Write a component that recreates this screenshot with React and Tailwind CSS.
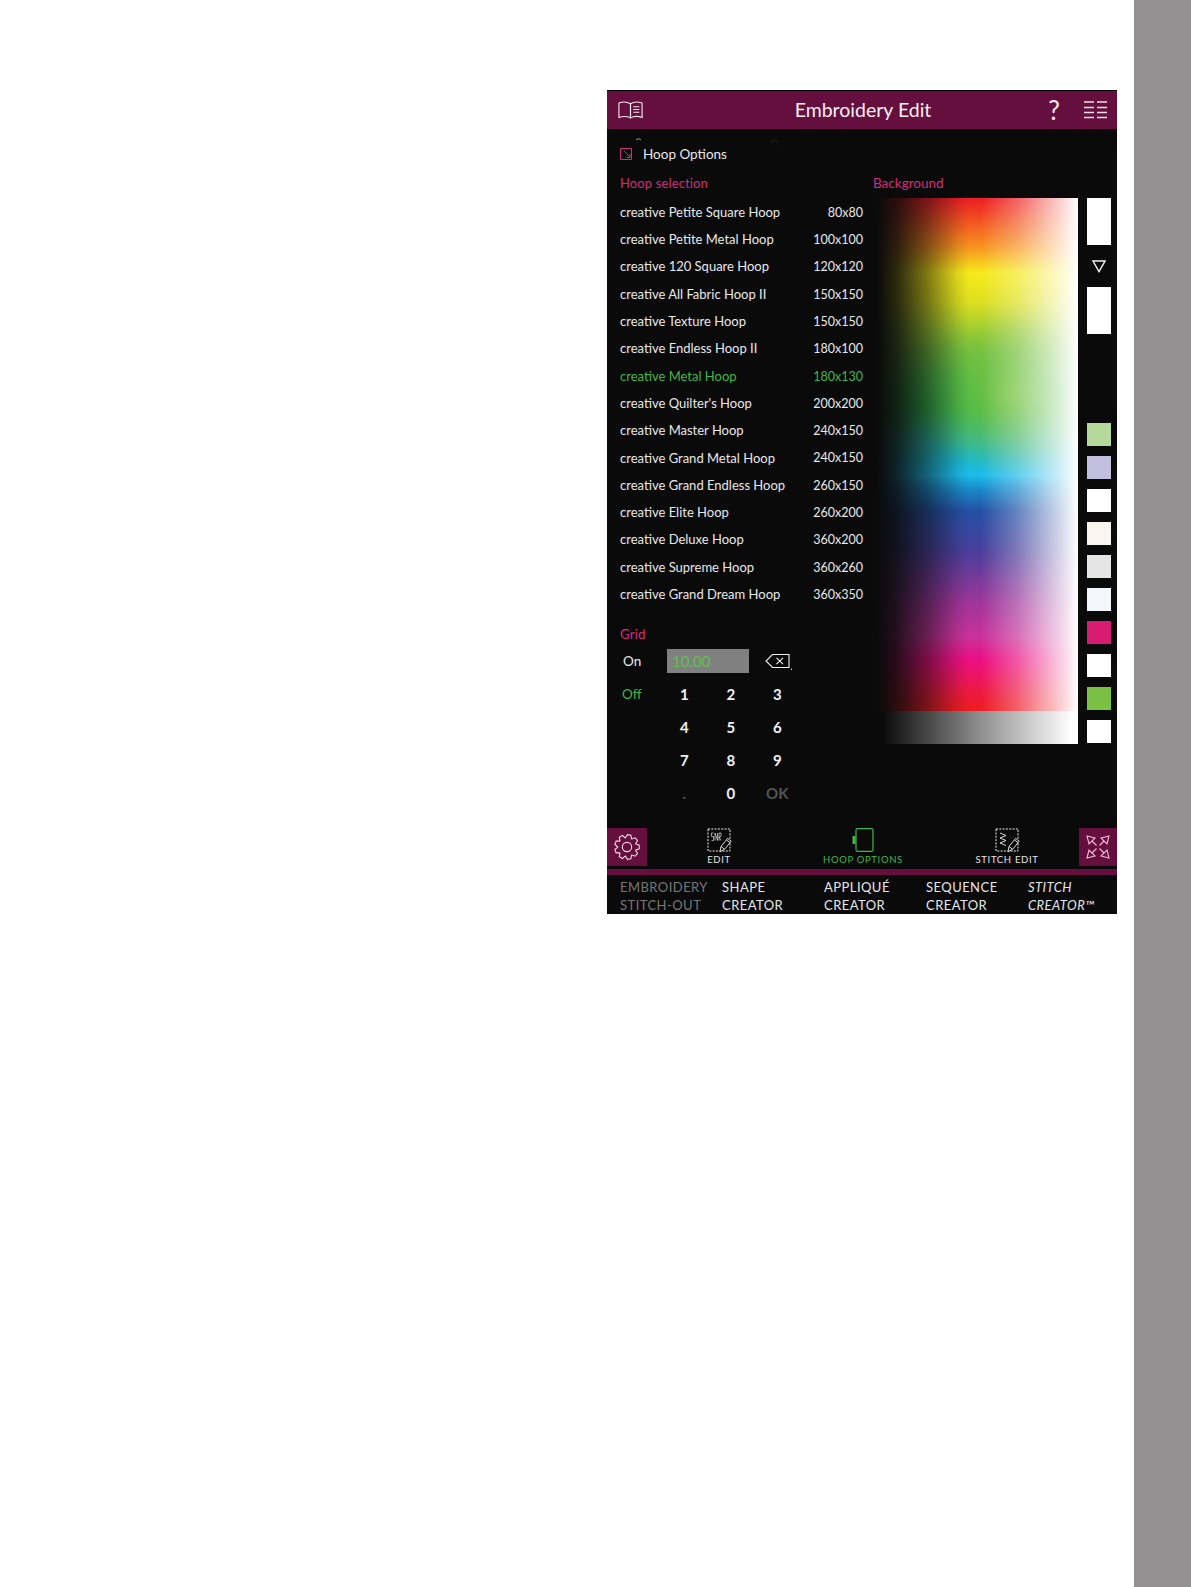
import React from 'react'

const FONT = "font-['Lato','Noto_Sans',sans-serif]"

const hoops = [
  ['creative Petite Square Hoop', '80x80'],
  ['creative Petite Metal Hoop', '100x100'],
  ['creative 120 Square Hoop', '120x120'],
  ['creative All Fabric Hoop II', '150x150'],
  ['creative Texture Hoop', '150x150'],
  ['creative Endless Hoop II', '180x100'],
  ['creative Metal Hoop', '180x130', true],
  ["creative Quilter's Hoop", '200x200'],
  ['creative Master Hoop', '240x150'],
  ['creative Grand Metal Hoop', '240x150'],
  ['creative Grand Endless Hoop', '260x150'],
  ['creative Elite Hoop', '260x200'],
  ['creative Deluxe Hoop', '360x200'],
  ['creative Supreme Hoop', '360x260'],
  ['creative Grand Dream Hoop', '360x350'],
]

const tabs = [
  ['EMBROIDERY', 'STITCH-OUT', 'text-[#777777]'],
  ['SHAPE', 'CREATOR', 'text-[#e6e6e6]'],
  ['APPLIQUÉ', 'CREATOR', 'text-[#e6e6e6]'],
  ['SEQUENCE', 'CREATOR', 'text-[#e6e6e6]'],
  ['STITCH', 'CREATOR™', 'text-[#e6e6e6] italic'],
]

const gearPath = () => {
  const teeth = 9
  const pts = []
  for (let i = 0; i < teeth; i++) {
    const a = (i / teeth) * Math.PI * 2
    const w = Math.PI / teeth
    const add = (r, t) => pts.push([(12 + r * Math.cos(t)).toFixed(2), (12 + r * Math.sin(t)).toFixed(2)])
    add(8.6, a - w * 0.95)
    add(11.4, a - w * 0.42)
    add(11.4, a + w * 0.42)
    add(8.6, a + w * 0.95)
  }
  return 'M' + pts.map((p) => p.join(' ')).join('L') + 'Z'
}

const Book = () => (
  <svg width="25" height="20" viewBox="0 0 27 20" fill="none" stroke="#f4e9ef" strokeWidth="1.2">
    <path d="M1 2.5C5 1 9.5 1 13.5 3.2V18.5C9.5 16.6 5 16.6 1 18Z" />
    <path d="M13.5 3.2C17 1 22 1 26 2.5V18C22 16.6 17 16.6 13.5 18.5Z" />
    <path d="M16.5 6.5H23M16.5 9.5H23M16.5 12.5H23" />
  </svg>
)

const Menu = () => (
  <svg width="24" height="18" viewBox="0 0 24 18" stroke="#f6dbe8" strokeWidth="1.4">
    <path d="M0 1H10M13 1H23M0 6.5H10M13 6.5H23M0 11.5H10M13 11.5H23M0 16.5H10M13 16.5H23" />
  </svg>
)

const Backspace = () => (
  <svg width="28" height="18" viewBox="0 0 28 18" fill="none" stroke="#f0f0f0" strokeWidth="1.1">
    <path d="M7.5 1.5H24V14.5H7.5L1 8Z" />
    <path d="M11.5 4.8L18 11.2M18 4.8L11.5 11.2" />
    <path d="M26.2 16.2H27" strokeWidth="1.4" />
  </svg>
)

const Pencil = () => (
  <g fill="#0a0a0a" stroke="#eeeeee" strokeWidth="0.9">
    <path d="M13 23.8L14 18.5L20.6 10.4L24.2 13.2L17.6 21.3Z" />
    <path d="M19.4 11.9L23 14.7M14 18.5L17.6 21.3" />
  </g>
)

const EditIcon = () => (
  <svg width="25" height="25" viewBox="0 0 25 25">
    <rect x="1" y="1" width="22" height="22" fill="none" stroke="#eeeeee" strokeWidth="1" strokeDasharray="2 1.3" />
    <path d="M6.5 5H4.5V8.5H6.5V12.5H4.5M8 12.5V5L10.5 12.5V5M12 12.5V5H14V8.5L12 9L14 12.5" fill="none" stroke="#dddddd" strokeWidth="0.7" />
    <Pencil />
  </svg>
)

const StitchIcon = () => (
  <svg width="25" height="25" viewBox="0 0 25 25">
    <rect x="1" y="1" width="22" height="22" fill="none" stroke="#eeeeee" strokeWidth="1" strokeDasharray="2 1.3" />
    <path d="M5 5L11 7.5L5 10L11 12.5L5 15L11 17.5" fill="none" stroke="#eeeeee" strokeWidth="0.9" />
    <Pencil />
  </svg>
)

const HoopIcon = () => (
  <svg width="22" height="25" viewBox="0 0 22 25" fill="none">
    <rect x="4" y="0.7" width="17" height="22.6" rx="1.5" stroke="#43b649" strokeWidth="1.2" />
    <rect x="0.5" y="8" width="3" height="8" fill="#43b649" />
  </svg>
)

const Expand = () => (
  <svg width="26" height="26" viewBox="0 0 26 26" fill="none" stroke="#f4bcd8" strokeWidth="1.1">
    <path d="M2 2L10 4L4 10ZM7 7L11.5 11.5" />
    <path d="M24 2L16 4L22 10ZM19 7L14.5 11.5" />
    <path d="M2 24L10 22L4 16ZM7 19L11.5 14.5" />
    <path d="M24 24L16 22L22 16ZM19 19L14.5 14.5" />
  </svg>
)

const Key = ({ children, dim }) => (
  <div className={`flex items-center justify-center h-[33px] mt-[4px] text-[15px] font-bold ${dim ? 'text-[#555555]' : 'text-[#f2f2f2]'}`}>
    {children}
  </div>
)

const ToolItem = ({ icon, label, green }) => (
  <div className="flex-1 flex flex-col items-center">
    <div className="h-[25px]">{icon}</div>
    <span className={`text-[9.5px] leading-[13px] tracking-[0.07em] ${green ? 'text-[#43b649]' : 'text-[#e6e6e6]'}`}>{label}</span>
  </div>
)

export default function App() {
  return (
    <div className={`flex h-[1587px] bg-white ${FONT}`}>
      <div className="flex-1 pt-[90px] pl-[607px]">
        <div className="w-[510px] h-[824px] flex flex-col bg-[#0a0a0a]">
          {/* title bar */}
          <div className="h-[39px] shrink-0 flex items-center bg-[#650f3e] border-t border-black pl-[11px] pr-[9px]">
            <div className="flex-1">
              <Book />
            </div>
            <span className="text-[19.5px] text-[#f6eef2]">Embroidery Edit</span>
            <div className="flex-1 flex items-center justify-end">
              <span className="text-[26px] text-[#f4e9ef] mr-[24px]">?</span>
              <Menu />
            </div>
          </div>

          <div className="flex flex-1">
            {/* hoop list and grid */}
            <div className="relative w-[266px] pl-[13px] pt-[15px] text-[13px]">
              <svg className="absolute left-[28px] top-[8px]" width="145" height="10" viewBox="0 0 145 10" fill="none">
                <path d="M1 3C2 1.5 5 1.5 6 3" stroke="#9a9a9a" strokeWidth="1" />
                <path d="M136 6C136 3 140 3 141 4C143 4 144 6 143 8" stroke="#222222" strokeWidth="1" />
              </svg>
              <div className="flex items-center h-[20px] text-[13.5px] text-[#e8e8e8]">
                <svg width="12" height="12" viewBox="0 0 12 12" fill="none" stroke="#d22c7c" strokeWidth="1">
                  <path d="M0.5 0.5H11.5V11.5H0.5ZM4 3L10 9M6.5 9.5H10V6" />
                </svg>
                <span className="ml-[11px]">Hoop Options</span>
              </div>
              <div className="mt-[9px] h-[20px] leading-[20px] tracking-[0.01em] text-[#d22c7c]">Hoop selection</div>
              <div className="mt-[6px] w-[243px]">
                {hoops.map(([name, size, active]) => (
                  <div key={name} className={`h-[27.3px] flex items-center justify-between ${active ? 'text-[#43b649]' : 'text-[#e8e8e8]'}`}>
                    <span>{name}</span>
                    <span className="text-[12.5px] pt-[1px]">{size}</span>
                  </div>
                ))}
              </div>
              <div className="mt-[16px] h-[20px] leading-[20px] text-[13.5px] text-[#d22c7c]">Grid</div>
              <div className="mt-[5px] grid grid-cols-[41px_46.5px_46.5px_46.5px] grid-rows-[24px_33px_33px_33px_33px] text-[13.5px]">
                <div className="flex items-center pl-[3px] text-[#e8e8e8]">On</div>
                <div className="col-span-2 ml-[6px] mr-[5px] bg-[#808080] text-[#5cc04f] text-[15px] leading-[24px] pl-[5px]">10.00</div>
                <div className="flex items-center justify-center pt-[2px] pl-[3px]"><Backspace /></div>
                <div className="flex items-center pl-[2px] text-[#43b649] mt-[8px]">Off</div>
                <Key>1</Key>
                <Key>2</Key>
                <Key>3</Key>
                <div />
                <Key>4</Key>
                <Key>5</Key>
                <Key>6</Key>
                <div />
                <Key>7</Key>
                <Key>8</Key>
                <Key>9</Key>
                <div />
                <Key dim>.</Key>
                <Key>0</Key>
                <Key dim>OK</Key>
              </div>
            </div>

            {/* background colour picker */}
            <div className="pt-[44px] text-[13.5px]">
              <div className="h-[20px] leading-[20px] text-[#d22c7c]">Background</div>
              <div className="mt-[5px] flex">
                <div className="ml-[4px] w-[201px]">
                  <div className="h-[513px] bg-[linear-gradient(to_right,#0a0a0a_0%,rgba(10,10,10,0.85)_10%,rgba(10,10,10,0.5)_25%,rgba(10,10,10,0.1)_40%,rgba(10,10,10,0)_46%,rgba(255,255,255,0)_52%,rgba(255,255,255,0.3)_70%,rgba(255,255,255,0.55)_81%,rgba(255,255,255,0.8)_92%,#ffffff_100%),radial-gradient(ellipse_50%_16%_at_68%_38%,rgba(130,198,63,0.9)_0%,rgba(130,198,63,0)_100%),linear-gradient(to_bottom,#ed1c24_0%,#f7931e_9.5%,#f6ea1a_14.6%,#dfe01f_20%,#a8d02e_25%,#6fbe3f_30%,#3cb54a_36%,#2bb24c_41%,#2bb59a_47%,#1bb7cd_51%,#1cbcea_54%,#1a86c8_57%,#2450a5_61%,#4a3f9c_69%,#a0359a_79%,#c9329a_85.5%,#ec0f83_90%,#ed1c24_99%)]" />
                  <div className="h-[33px] bg-[linear-gradient(to_right,#0a0a0a_3%,#8c8c8c_50%,#ffffff_97%)]" />
                </div>
                <div className="ml-[9px] w-[24px] flex flex-col">
                  <div className="h-[47px] bg-white" />
                  <div className="h-[42px] flex items-center justify-center">
                    <svg width="14" height="13" viewBox="0 0 14 13" fill="none" stroke="#f2f2f2" strokeWidth="1.4">
                      <path d="M1 1H13L7 11.5Z" />
                    </svg>
                  </div>
                  <div className="h-[47px] bg-white" />
                  <div className="mt-[89px] flex flex-col gap-[10px]">
                    {['#b5d99c', '#c3bfde', '#ffffff', '#fbf5ef', '#e5e5e5', '#f3f7fb', '#d71a72', '#ffffff', '#7ac143', '#ffffff'].map((c, i) => (
                      <div key={i} className="h-[23px]" style={{ backgroundColor: c }} />
                    ))}
                  </div>
                </div>
              </div>
            </div>
          </div>

          {/* toolbar */}
          <div className="h-[38px] shrink-0 flex">
            <div className="w-[40px] flex items-center justify-center bg-[#650f3e]">
              <svg width="26" height="26" viewBox="0 0 24 24" fill="none" stroke="#f3d9e6" strokeWidth="1">
                <path d={gearPath()} />
                <circle cx="12" cy="12" r="4.3" />
              </svg>
            </div>
            <ToolItem icon={<EditIcon />} label="EDIT" />
            <ToolItem icon={<HoopIcon />} label="HOOP OPTIONS" green />
            <ToolItem icon={<StitchIcon />} label="STITCH EDIT" />
            <div className="w-[38px] flex items-center justify-center bg-[#650f3e]">
              <Expand />
            </div>
          </div>
          <div className="mt-[3px] h-[6px] shrink-0 bg-[#650f3e]" />
          <div className="h-[39px] shrink-0 flex pl-[13px] pt-[3px] text-[13px] leading-[18px] tracking-[0.035em]">
            {tabs.map(([a, b, cls]) => (
              <div key={a} className={`w-[102px] shrink-0 ${cls}`}>
                <div>{a}</div>
                <div>{b}</div>
              </div>
            ))}
          </div>
        </div>
      </div>
      <div className="w-[57px] bg-[#939192]" />
    </div>
  )
}
